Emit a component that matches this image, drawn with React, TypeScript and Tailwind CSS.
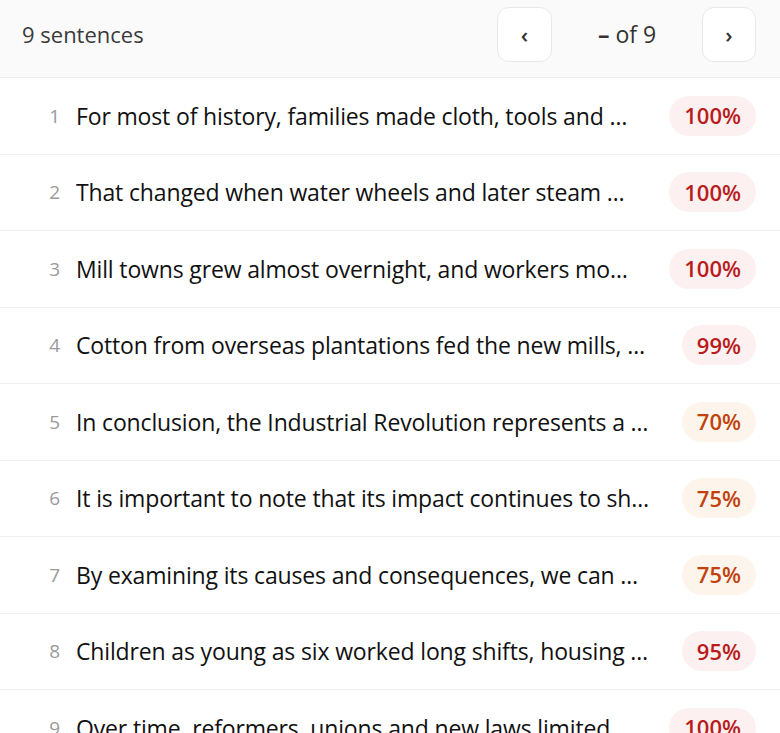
const rows = [
  { n: 1, text: 'For most of history, families made cloth, tools and …', score: 100 },
  { n: 2, text: 'That changed when water wheels and later steam …', score: 100 },
  { n: 3, text: 'Mill towns grew almost overnight, and workers mo…', score: 100 },
  { n: 4, text: 'Cotton from overseas plantations fed the new mills, …', score: 99 },
  { n: 5, text: 'In conclusion, the Industrial Revolution represents a …', score: 70 },
  { n: 6, text: 'It is important to note that its impact continues to sh…', score: 75 },
  { n: 7, text: 'By examining its causes and consequences, we can …', score: 75 },
  { n: 8, text: 'Children as young as six worked long shifts, housing …', score: 95 },
  { n: 9, text: 'Over time, reformers, unions and new laws limited …', score: 100 },
];

function ScoreBadge({ score }: { score: number }) {
  const high = score >= 90;
  return (
    <span
      className={
        high
          ? 'shrink-0 rounded-full bg-[#fdf0f0] px-[15px] h-10 flex items-center text-[22px] font-semibold text-[#b91c1c]'
          : 'shrink-0 rounded-full bg-[#fdf5ec] px-[15px] h-10 flex items-center text-[22px] font-semibold text-[#c2410c]'
      }
    >
      {score}%
    </span>
  );
}

export default function App() {
  return (
    <div className="min-h-screen bg-white" style={{ fontFamily: '"Open Sans", "Noto Sans", sans-serif' }}>
      <div className="flex items-start justify-between bg-[#fafafa] border-b border-[#efefef] pl-[22px] pr-6 pt-[7px] pb-[15px]">
        <div className="h-[55px] flex items-center text-[22px] font-medium text-[#3a3a3a]">9 sentences</div>
        <div className="flex items-center">
          <button className="w-[55px] h-[55px] rounded-xl border border-[#e8e8e8] bg-white flex items-center justify-center text-[22px] font-semibold text-[#333]">
            ‹
          </button>
          <div className="w-[150px] text-center text-[23px] text-[#333]">
            <span className="font-bold">–</span> of 9
          </div>
          <button className="w-[54px] h-[55px] rounded-xl border border-[#e8e8e8] bg-white flex items-center justify-center text-[22px] font-semibold text-[#333]">
            ›
          </button>
        </div>
      </div>
      <div className="flex flex-col">
        {rows.map((r) => (
          <div key={r.n} className="flex items-center h-[76.5px] border-b border-[#f1f1f1] pl-6 pr-6">
            <span className="w-9 shrink-0 text-right text-[19px] text-[#9a9a9a]">{r.n}</span>
            <span className="ml-4 flex-1 min-w-0 truncate text-[23px] tracking-[-0.15px] text-[#111]">{r.text}</span>
            <div className="ml-3">
              <ScoreBadge score={r.score} />
            </div>
          </div>
        ))}
      </div>
    </div>
  );
}
